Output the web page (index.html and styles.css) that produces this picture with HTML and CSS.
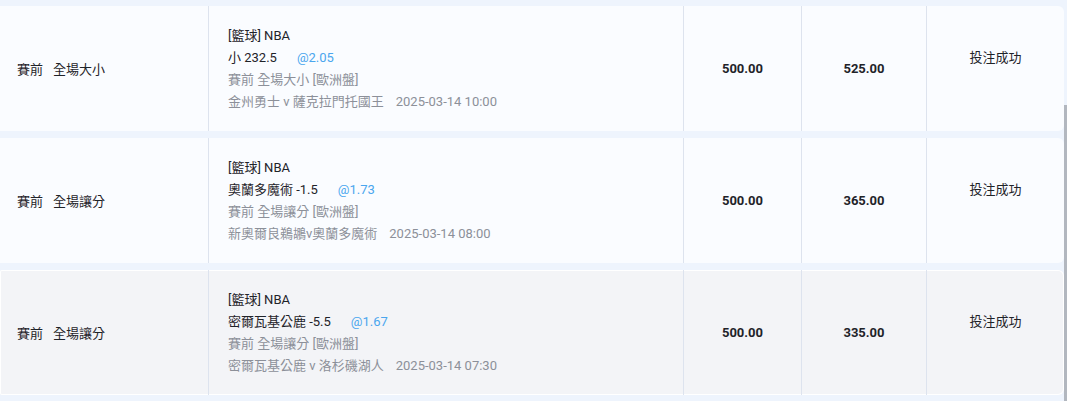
FILE: index.html
```html
<!DOCTYPE html>
<html lang="zh-Hant">
<head>
<meta charset="utf-8">
<link rel="stylesheet" href="styles.css">
</head>
<body>
<div class="list">
  <div class="row">
    <div class="cell type"><span>賽前</span><span class="sp">全場大小</span></div>
    <div class="cell detail">
      <div class="line">[籃球] NBA</div>
      <div class="line">小 232.5<span class="odds">@2.05</span></div>
      <div class="line muted">賽前 全場大小 [歐洲盤]</div>
      <div class="line muted">金州勇士 v 薩克拉門托國王<span class="date">2025-03-14 10:00</span></div>
    </div>
    <div class="cell num">500.00</div>
    <div class="cell num">525.00</div>
    <div class="cell status"><span>投注成功</span></div>
  </div>
  <div class="row">
    <div class="cell type"><span>賽前</span><span class="sp">全場讓分</span></div>
    <div class="cell detail">
      <div class="line">[籃球] NBA</div>
      <div class="line">奧蘭多魔術 -1.5<span class="odds">@1.73</span></div>
      <div class="line muted">賽前 全場讓分 [歐洲盤]</div>
      <div class="line muted">新奧爾良鵜鶘v奧蘭多魔術<span class="date">2025-03-14 08:00</span></div>
    </div>
    <div class="cell num">500.00</div>
    <div class="cell num">365.00</div>
    <div class="cell status"><span>投注成功</span></div>
  </div>
  <div class="row hover">
    <div class="cell type"><span>賽前</span><span class="sp">全場讓分</span></div>
    <div class="cell detail">
      <div class="line">[籃球] NBA</div>
      <div class="line">密爾瓦基公鹿 -5.5<span class="odds">@1.67</span></div>
      <div class="line muted">賽前 全場讓分 [歐洲盤]</div>
      <div class="line muted">密爾瓦基公鹿 v 洛杉磯湖人<span class="date">2025-03-14 07:30</span></div>
    </div>
    <div class="cell num">500.00</div>
    <div class="cell num">335.00</div>
    <div class="cell status"><span>投注成功</span></div>
  </div>
</div>
<div class="scroll-thumb"></div>
</body>
</html>
```

FILE: styles.css
```css
html, body {
  margin: 0;
  padding: 0;
  height: 100%;
  overflow: hidden;
}
body {
  background: #eef4fd;
  font-family: Roboto, "Noto Sans CJK TC", sans-serif;
  font-size: 13px;
  color: #1f2329;
}
.list {
  display: flex;
  flex-direction: column;
  gap: 7px;
  padding-top: 6px;
  width: 1064px;
}
.row {
  display: grid;
  grid-template-columns: 208px 475px 118px 125px 138px;
  height: 125px;
  background: #fafcff;
  border-radius: 0 6px 6px 0;
  box-sizing: border-box;
}
.row.hover {
  background: #f3f4f7;
  box-shadow: inset 0 0 0 1px #ffffff;
  border-radius: 2px 6px 6px 2px;
}
.cell {
  display: flex;
  align-items: center;
  box-sizing: border-box;
}
.cell + .cell {
  border-left: 1px solid #dde3ee;
}
.type {
  padding-left: 17px;
}
.type .sp {
  margin-left: 10px;
}
.detail {
  flex-direction: column;
  align-items: flex-start;
  justify-content: center;
  padding-left: 19px;
}
.line {
  line-height: 22px;
  white-space: nowrap;
}
.muted {
  color: #8c9099;
}
.odds {
  color: #4aa6ee;
  margin-left: 20px;
}
.date {
  margin-left: 12px;
}
.num {
  justify-content: center;
  font-weight: bold;
  font-size: 13px;
}
.status {
  justify-content: center;
}
.status span {
  margin-bottom: 24px;
}
.scroll-thumb {
  position: absolute;
  right: 0;
  top: 105px;
  width: 3px;
  height: 296px;
  background: #b2b7bf;
}
```
